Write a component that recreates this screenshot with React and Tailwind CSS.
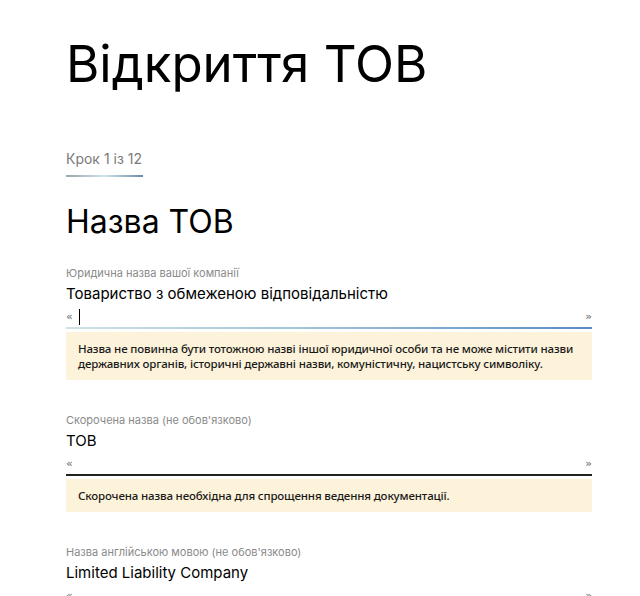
const sans = { fontFamily: 'Inter, "Noto Sans", sans-serif' }

function Field({ label, value, focused, hint }) {
  return (
    <div className="flex flex-col">
      <span className="text-[11px] leading-[14px] text-[#8a8a8a]" style={sans}>{label}</span>
      <span className="mt-[4px] text-[15px] leading-[20px] text-black" style={sans}>{value}</span>
      <div className="mt-[3px] flex h-[20px] items-center justify-between text-[11px] text-[#666]" style={{ fontFamily: '"DejaVu Sans", sans-serif' }}>
        <span className="flex items-center gap-[6px]">
          «{focused && <span className="h-[16px] w-px bg-black" />}
        </span>
        <span>»</span>
      </div>
      {focused ? (
        <div className="h-[2px] bg-gradient-to-r from-[#cfe3e3] via-[#9cc0d6] to-[#5a8cc2]" />
      ) : (
        <div className="h-[2px] bg-[#222]" />
      )}
      {hint && (
        <div
          className="mt-[3px] bg-[#fdf3da] px-[12px] py-[9px] text-[11.5px] font-medium leading-[15px] tracking-[-0.15px] text-[#1a1a1a]"
          style={{ fontFamily: '"Noto Sans", "DejaVu Sans", sans-serif' }}
        >
          {hint}
        </div>
      )}
    </div>
  )
}

export default function App() {
  return (
    <div className="h-[596px] overflow-hidden bg-white">
      <div className="ml-[66px] w-[526px] pt-[34px]">
        <h1 className="text-[51px] leading-[60px] text-black" style={sans}>Відкриття ТОВ</h1>

        <div className="mt-[56px] text-[14px] leading-[18px] text-[#7a7a7a]" style={sans}>Крок 1 із 12</div>
        <div className="mt-[7px] h-[2px] w-[77px] bg-gradient-to-r from-[#9aa3aa] via-[#cde6e6] to-[#6f88a8]" />

        <h2 className="mt-[25px] text-[32px] leading-[40px] text-black" style={sans}>Назва ТОВ</h2>

        <div className="mt-[24px] flex flex-col gap-[33px]">
          <Field
            label="Юридична назва вашої компанії"
            value="Товариство з обмеженою відповідальністю"
            focused
            hint="Назва не повинна бути тотожною назві іншої юридичної особи та не може містити назви державних органів, історичні державні назви, комуністичну, нацистську символіку."
          />
          <Field
            label="Скорочена назва (не обов'язково)"
            value="ТОВ"
            hint="Скорочена назва необхідна для спрощення ведення документації."
          />
          <Field label="Назва англійською мовою (не обов'язково)" value="Limited Liability Company" />
        </div>
      </div>
    </div>
  )
}
